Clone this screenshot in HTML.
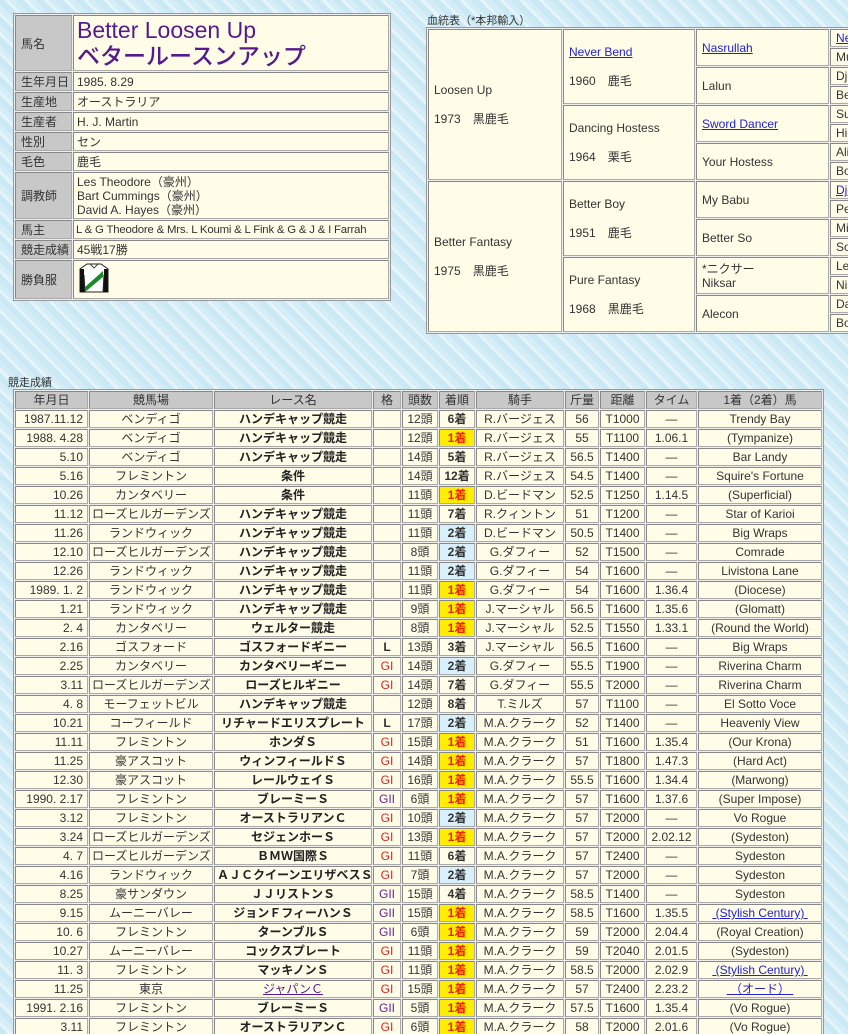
<!DOCTYPE html>
<html><head><meta charset="utf-8">
<style>
html,body{margin:0;padding:0;width:848px;height:1034px;overflow:hidden}
body{position:relative;font-family:"Liberation Sans","Noto Sans CJK JP",sans-serif;font-size:12px;color:#333;
background:repeating-linear-gradient(45deg,#cbe9f5 0,#cbe9f5 6px,#e6f5fb 6px,#e6f5fb 9px,#d4edf7 9px,#d4edf7 14px);}
table{border-collapse:separate;border-spacing:1px;background:#eee;border:1px solid #999;table-layout:fixed;position:absolute}
td,th{box-sizing:border-box;border:1px solid #aaa;border-top-color:#888;border-left-color:#888;background:#fffde8;padding:0 3px;overflow:hidden;white-space:nowrap}
th{background:#c8c8c8;font-weight:normal;color:#333}
.lbl{background:#c8c8c8;color:#333;padding-left:5px}
#prof td{height:18px}
.name{color:#551a8b;font-size:23px;line-height:26px;font-weight:500}
#ped td{height:18px;font-size:12px;padding-left:5px;vertical-align:middle}
a{color:#2222cc;text-decoration:underline}
#race td,#race th{height:18px;text-align:center;padding:0 2px;line-height:16px}
#race td.d{text-align:right;padding-right:4px}
#race td.r{font-weight:bold;color:#222}
.w{background:#ffee00!important;color:#ee2200;font-weight:bold}
.s{background:#d8f0fb!important;font-weight:bold}
.o{font-weight:bold}
.g1{color:#dd2222}.g2{color:#662299}
.cap{position:absolute;font-size:11px;color:#333}
#pedwrap{position:absolute;left:426px;top:27px;width:422px;height:310px;overflow:hidden}
</style></head><body>

<table id="prof" style="left:13px;top:13px;width:378px">
<colgroup><col style="width:57px"><col></colgroup>
<tr><td class="lbl" style="height:56px">馬名</td><td class="name" style="height:56px">Better Loosen Up<br>ベタールースンアップ</td></tr>
<tr><td class="lbl">生年月日</td><td>1985. 8.29</td></tr>
<tr><td class="lbl">生産地</td><td>オーストラリア</td></tr>
<tr><td class="lbl">生産者</td><td>H. J. Martin</td></tr>
<tr><td class="lbl">性別</td><td>セン</td></tr>
<tr><td class="lbl">毛色</td><td>鹿毛</td></tr>
<tr><td class="lbl" style="height:47px">調教師</td><td style="height:47px;line-height:14px">Les Theodore（豪州）<br>Bart Cummings（豪州）<br>David A. Hayes（豪州）</td></tr>
<tr><td class="lbl">馬主</td><td style="font-size:11.4px;letter-spacing:-0.2px;padding-left:2px">L &amp; G Theodore &amp; Mrs. L Koumi &amp; L Fink &amp; G &amp; J &amp; I Farrah</td></tr>
<tr><td class="lbl">競走成績</td><td>45戦17勝</td></tr>
<tr><td class="lbl" style="height:37px">勝負服</td><td style="height:37px"><svg width="34" height="34" viewBox="0 0 34 34"><path d="M10 3 L24 3 L31 8 L31 31 L27 31 L27 14 L26 31 L8 31 L7 14 L7 31 L3 31 L3 8 Z" fill="#fff" stroke="#222" stroke-width="1"/><path d="M3 8 L7 8 L7 31 L3 31 Z M27 8 L31 8 L31 31 L27 31 Z" fill="#111"/><path d="M8 26 L26 10 L26 16 L8 31 Z" fill="#1a8a2a"/><path d="M13 3 L17 7 L21 3" fill="none" stroke="#444"/></svg></td></tr>
</table>

<div class="cap" style="left:427px;top:12px">血統表（*本邦輸入）</div>
<div id="pedwrap">
<table id="ped" style="left:0;top:0;width:540px">
<colgroup><col style="width:134px"><col style="width:132px"><col style="width:133px"><col style="width:134px"></colgroup>
<tr><td rowspan="8" style="line-height:29px">Loosen Up<br>1973　黒鹿毛</td><td rowspan="4" style="line-height:29px"><a>Never Bend</a><br>1960　鹿毛</td><td rowspan="2"><a>Nasrullah</a></td><td><a>Nearco</a></td></tr>
<tr><td>Mumtaz Begum</td></tr>
<tr><td rowspan="2">Lalun</td><td>Djeddah</td></tr>
<tr><td>Be Faithful</td></tr>
<tr><td rowspan="4" style="line-height:29px">Dancing Hostess<br>1964　栗毛</td><td rowspan="2"><a>Sword Dancer</a></td><td>Sunglow</td></tr>
<tr><td>Highland Fling</td></tr>
<tr><td rowspan="2">Your Hostess</td><td>Alibhai</td></tr>
<tr><td>Boudoir</td></tr>
<tr><td rowspan="8" style="line-height:29px">Better Fantasy<br>1975　黒鹿毛</td><td rowspan="4" style="line-height:29px">Better Boy<br>1951　鹿毛</td><td rowspan="2">My Babu</td><td><a>Djebel</a></td></tr>
<tr><td>Perfume</td></tr>
<tr><td rowspan="2">Better So</td><td>Mieuxce</td></tr>
<tr><td>Soga</td></tr>
<tr><td rowspan="4" style="line-height:29px">Pure Fantasy<br>1968　黒鹿毛</td><td rowspan="2" style="line-height:14px">*ニクサー<br>Niksar</td><td>Le Haar</td></tr>
<tr><td>Niskampe</td></tr>
<tr><td rowspan="2">Alecon</td><td>Darius</td></tr>
<tr><td>Bonnie</td></tr>
</table>
</div>

<div class="cap" style="left:8px;top:374px">競走成績</div>
<table id="race" style="left:13px;top:389px;width:810px">
<colgroup><col style="width:73px"><col style="width:124px"><col style="width:158px"><col style="width:28px"><col style="width:36px"><col style="width:36px"><col style="width:88px"><col style="width:34px"><col style="width:45px"><col style="width:51px"><col style="width:124px"></colgroup>
<tr><th>年月日</th><th>競馬場</th><th>レース名</th><th>格</th><th>頭数</th><th>着順</th><th>騎手</th><th>斤量</th><th>距離</th><th>タイム</th><th>1着（2着）馬</th></tr>
<tr><td class="d">1987.11.12</td><td>ベンディゴ</td><td class="r">ハンデキャップ競走</td><td></td><td>12頭</td><td class="o">6着</td><td>R.バージェス</td><td>56</td><td>T1000</td><td>—</td><td>Trendy Bay</td></tr>
<tr><td class="d">1988. 4.28</td><td>ベンディゴ</td><td class="r">ハンデキャップ競走</td><td></td><td>12頭</td><td class="w">1着</td><td>R.バージェス</td><td>55</td><td>T1100</td><td>1.06.1</td><td>(Tympanize)</td></tr>
<tr><td class="d">5.10</td><td>ベンディゴ</td><td class="r">ハンデキャップ競走</td><td></td><td>14頭</td><td class="o">5着</td><td>R.バージェス</td><td>56.5</td><td>T1400</td><td>—</td><td>Bar Landy</td></tr>
<tr><td class="d">5.16</td><td>フレミントン</td><td class="r">条件</td><td></td><td>14頭</td><td class="o">12着</td><td>R.バージェス</td><td>54.5</td><td>T1400</td><td>—</td><td>Squire's Fortune</td></tr>
<tr><td class="d">10.26</td><td>カンタベリー</td><td class="r">条件</td><td></td><td>11頭</td><td class="w">1着</td><td>D.ビードマン</td><td>52.5</td><td>T1250</td><td>1.14.5</td><td>(Superficial)</td></tr>
<tr><td class="d">11.12</td><td>ローズヒルガーデンズ</td><td class="r">ハンデキャップ競走</td><td></td><td>11頭</td><td class="o">7着</td><td>R.クィントン</td><td>51</td><td>T1200</td><td>—</td><td>Star of Karioi</td></tr>
<tr><td class="d">11.26</td><td>ランドウィック</td><td class="r">ハンデキャップ競走</td><td></td><td>11頭</td><td class="s">2着</td><td>D.ビードマン</td><td>50.5</td><td>T1400</td><td>—</td><td>Big Wraps</td></tr>
<tr><td class="d">12.10</td><td>ローズヒルガーデンズ</td><td class="r">ハンデキャップ競走</td><td></td><td>8頭</td><td class="s">2着</td><td>G.ダフィー</td><td>52</td><td>T1500</td><td>—</td><td>Comrade</td></tr>
<tr><td class="d">12.26</td><td>ランドウィック</td><td class="r">ハンデキャップ競走</td><td></td><td>11頭</td><td class="s">2着</td><td>G.ダフィー</td><td>54</td><td>T1600</td><td>—</td><td>Livistona Lane</td></tr>
<tr><td class="d">1989. 1. 2</td><td>ランドウィック</td><td class="r">ハンデキャップ競走</td><td></td><td>11頭</td><td class="w">1着</td><td>G.ダフィー</td><td>54</td><td>T1600</td><td>1.36.4</td><td>(Diocese)</td></tr>
<tr><td class="d">1.21</td><td>ランドウィック</td><td class="r">ハンデキャップ競走</td><td></td><td>9頭</td><td class="w">1着</td><td>J.マーシャル</td><td>56.5</td><td>T1600</td><td>1.35.6</td><td>(Glomatt)</td></tr>
<tr><td class="d">2. 4</td><td>カンタベリー</td><td class="r">ウェルター競走</td><td></td><td>8頭</td><td class="w">1着</td><td>J.マーシャル</td><td>52.5</td><td>T1550</td><td>1.33.1</td><td>(Round the World)</td></tr>
<tr><td class="d">2.16</td><td>ゴスフォード</td><td class="r">ゴスフォードギニー</td><td class="o">L</td><td>13頭</td><td class="o">3着</td><td>J.マーシャル</td><td>56.5</td><td>T1600</td><td>—</td><td>Big Wraps</td></tr>
<tr><td class="d">2.25</td><td>カンタベリー</td><td class="r">カンタベリーギニー</td><td class="g1">GI</td><td>14頭</td><td class="s">2着</td><td>G.ダフィー</td><td>55.5</td><td>T1900</td><td>—</td><td>Riverina Charm</td></tr>
<tr><td class="d">3.11</td><td>ローズヒルガーデンズ</td><td class="r">ローズヒルギニー</td><td class="g1">GI</td><td>14頭</td><td class="o">7着</td><td>G.ダフィー</td><td>55.5</td><td>T2000</td><td>—</td><td>Riverina Charm</td></tr>
<tr><td class="d">4. 8</td><td>モーフェットビル</td><td class="r">ハンデキャップ競走</td><td></td><td>12頭</td><td class="o">8着</td><td>T.ミルズ</td><td>57</td><td>T1100</td><td>—</td><td>El Sotto Voce</td></tr>
<tr><td class="d">10.21</td><td>コーフィールド</td><td class="r">リチャードエリスプレート</td><td class="o">L</td><td>17頭</td><td class="s">2着</td><td>M.A.クラーク</td><td>52</td><td>T1400</td><td>—</td><td>Heavenly View</td></tr>
<tr><td class="d">11.11</td><td>フレミントン</td><td class="r">ホンダＳ</td><td class="g1">GI</td><td>15頭</td><td class="w">1着</td><td>M.A.クラーク</td><td>51</td><td>T1600</td><td>1.35.4</td><td>(Our Krona)</td></tr>
<tr><td class="d">11.25</td><td>豪アスコット</td><td class="r">ウィンフィールドＳ</td><td class="g1">GI</td><td>14頭</td><td class="w">1着</td><td>M.A.クラーク</td><td>57</td><td>T1800</td><td>1.47.3</td><td>(Hard Act)</td></tr>
<tr><td class="d">12.30</td><td>豪アスコット</td><td class="r">レールウェイＳ</td><td class="g1">GI</td><td>16頭</td><td class="w">1着</td><td>M.A.クラーク</td><td>55.5</td><td>T1600</td><td>1.34.4</td><td>(Marwong)</td></tr>
<tr><td class="d">1990. 2.17</td><td>フレミントン</td><td class="r">ブレーミーＳ</td><td class="g2">GII</td><td>6頭</td><td class="w">1着</td><td>M.A.クラーク</td><td>57</td><td>T1600</td><td>1.37.6</td><td>(Super Impose)</td></tr>
<tr><td class="d">3.12</td><td>フレミントン</td><td class="r">オーストラリアンＣ</td><td class="g1">GI</td><td>10頭</td><td class="s">2着</td><td>M.A.クラーク</td><td>57</td><td>T2000</td><td>—</td><td>Vo Rogue</td></tr>
<tr><td class="d">3.24</td><td>ローズヒルガーデンズ</td><td class="r">セジェンホーＳ</td><td class="g1">GI</td><td>13頭</td><td class="w">1着</td><td>M.A.クラーク</td><td>57</td><td>T2000</td><td>2.02.12</td><td>(Sydeston)</td></tr>
<tr><td class="d">4. 7</td><td>ローズヒルガーデンズ</td><td class="r">ＢＭＷ国際Ｓ</td><td class="g1">GI</td><td>11頭</td><td class="o">6着</td><td>M.A.クラーク</td><td>57</td><td>T2400</td><td>—</td><td>Sydeston</td></tr>
<tr><td class="d">4.16</td><td>ランドウィック</td><td class="r">ＡＪＣクイーンエリザベスＳ</td><td class="g1">GI</td><td>7頭</td><td class="s">2着</td><td>M.A.クラーク</td><td>57</td><td>T2000</td><td>—</td><td>Sydeston</td></tr>
<tr><td class="d">8.25</td><td>豪サンダウン</td><td class="r">ＪＪリストンＳ</td><td class="g2">GII</td><td>15頭</td><td class="o">4着</td><td>M.A.クラーク</td><td>58.5</td><td>T1400</td><td>—</td><td>Sydeston</td></tr>
<tr><td class="d">9.15</td><td>ムーニーバレー</td><td class="r">ジョンＦフィーハンＳ</td><td class="g2">GII</td><td>15頭</td><td class="w">1着</td><td>M.A.クラーク</td><td>58.5</td><td>T1600</td><td>1.35.5</td><td><a>&nbsp;(Stylish Century)&nbsp;</a></td></tr>
<tr><td class="d">10. 6</td><td>フレミントン</td><td class="r">ターンブルＳ</td><td class="g2">GII</td><td>6頭</td><td class="w">1着</td><td>M.A.クラーク</td><td>59</td><td>T2000</td><td>2.04.4</td><td>(Royal Creation)</td></tr>
<tr><td class="d">10.27</td><td>ムーニーバレー</td><td class="r">コックスプレート</td><td class="g1">GI</td><td>11頭</td><td class="w">1着</td><td>M.A.クラーク</td><td>59</td><td>T2040</td><td>2.01.5</td><td>(Sydeston)</td></tr>
<tr><td class="d">11. 3</td><td>フレミントン</td><td class="r">マッキノンＳ</td><td class="g1">GI</td><td>11頭</td><td class="w">1着</td><td>M.A.クラーク</td><td>58.5</td><td>T2000</td><td>2.02.9</td><td><a>&nbsp;(Stylish Century)&nbsp;</a></td></tr>
<tr><td class="d">11.25</td><td>東京</td><td><a style="color:#551a8b">ジャパンＣ</a></td><td class="g1">GI</td><td>15頭</td><td class="w">1着</td><td>M.A.クラーク</td><td>57</td><td>T2400</td><td>2.23.2</td><td><a>&nbsp;（オード）&nbsp;</a></td></tr>
<tr><td class="d">1991. 2.16</td><td>フレミントン</td><td class="r">ブレーミーＳ</td><td class="g2">GII</td><td>5頭</td><td class="w">1着</td><td>M.A.クラーク</td><td>57.5</td><td>T1600</td><td>1.35.4</td><td>(Vo Rogue)</td></tr>
<tr><td class="d">3.11</td><td>フレミントン</td><td class="r">オーストラリアンＣ</td><td class="g1">GI</td><td>6頭</td><td class="w">1着</td><td>M.A.クラーク</td><td>58</td><td>T2000</td><td>2.01.6</td><td>(Vo Rogue)</td></tr>
</table>
</body></html>
